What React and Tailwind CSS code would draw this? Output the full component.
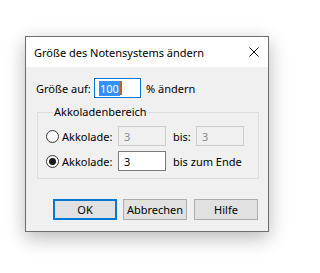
import React from "react";

const font = { fontFamily: '"Noto Sans", "Liberation Sans", sans-serif' };

const Radio = ({ checked }) => (
  <span className="flex h-[13px] w-[13px] shrink-0 items-center justify-center rounded-full border border-[#333333] bg-white">
    {checked && <span className="h-[7px] w-[7px] rounded-full bg-[#1a1a1a]" />}
  </span>
);

const Field = ({ value, disabled }) => (
  <div
    className={
      disabled
        ? "flex h-[20px] w-[48px] shrink-0 items-center border border-[#cccccc] bg-[#f0f0f0] pl-[5px] text-[#8a8a8a]"
        : "flex h-[20px] w-[48px] shrink-0 items-center border border-[#7a7a7a] bg-white pl-[5px] text-black"
    }
  >
    {value}
  </div>
);

const Button = ({ label, active, className = "" }) => (
  <button
    className={
      (active
        ? "border-2 border-[#0078d7] "
        : "border border-[#adadad] ") +
      "flex h-[21px] w-[64px] shrink-0 items-center justify-center bg-[#e1e1e1] text-black " +
      className
    }
  >
    {label}
  </button>
);

export default function App() {
  return (
    <div className="min-h-screen bg-white pl-[25px] pt-[36px]" style={font}>
      <div className="w-[244px] whitespace-nowrap border border-[#6e6e6e] bg-[#f0f0f0] text-[11px] leading-[15px] text-black shadow-[0_6px_18px_rgba(0,0,0,0.28)]">
        {/* title bar */}
        <div className="flex h-[30px] items-center justify-between bg-white pl-[8px] pr-[9px]">
          <span>Größe des Notensystems ändern</span>
          <svg width="10" height="10" viewBox="0 0 10 10">
            <path d="M0.5 0.5 L9.5 9.5 M9.5 0.5 L0.5 9.5" stroke="#111" strokeWidth="1" />
          </svg>
        </div>

        <div className="pb-[11px] pl-[11px] pt-[11px]">
          {/* size row */}
          <div className="flex items-center">
            <span className="ml-[-1px] w-[58px] shrink-0">Größe auf:</span>
            <div className="flex h-[20px] w-[47px] shrink-0 items-center border border-[#0078d7] bg-white pl-[4px]">
              <span className="bg-[#3390ff] px-[1px] text-white">100</span>
              <span className="h-[14px] w-[2px] bg-[#c0651e]" />
            </div>
            <span className="ml-[5px]">% ändern</span>
          </div>

          {/* group box */}
          <fieldset className="mt-[7px] w-[222px] border border-[#dcdcdc] pb-[7px] pl-[8px]">
            <legend className="ml-[7px] px-[1px] leading-[14px]">Akkoladenbereich</legend>
            <div className="mt-[7px] flex items-center">
              <Radio />
              <span className="ml-[3px] w-[56px] shrink-0">Akkolade:</span>
              <Field value="3" disabled />
              <span className="ml-[7px] w-[23px] shrink-0">bis:</span>
              <Field value="3" disabled />
            </div>
            <div className="mt-[5px] flex items-center">
              <Radio checked />
              <span className="ml-[3px] w-[56px] shrink-0">Akkolade:</span>
              <Field value="3" />
              <span className="ml-[7px]">bis zum Ende</span>
            </div>
          </fieldset>

          {/* buttons */}
          <div className="ml-[16px] mt-[20px] flex">
            <Button label="OK" active className="mr-[6px]" />
            <Button label="Abbrechen" className="mr-[7px]" />
            <Button label="Hilfe" />
          </div>
        </div>
      </div>
    </div>
  );
}
